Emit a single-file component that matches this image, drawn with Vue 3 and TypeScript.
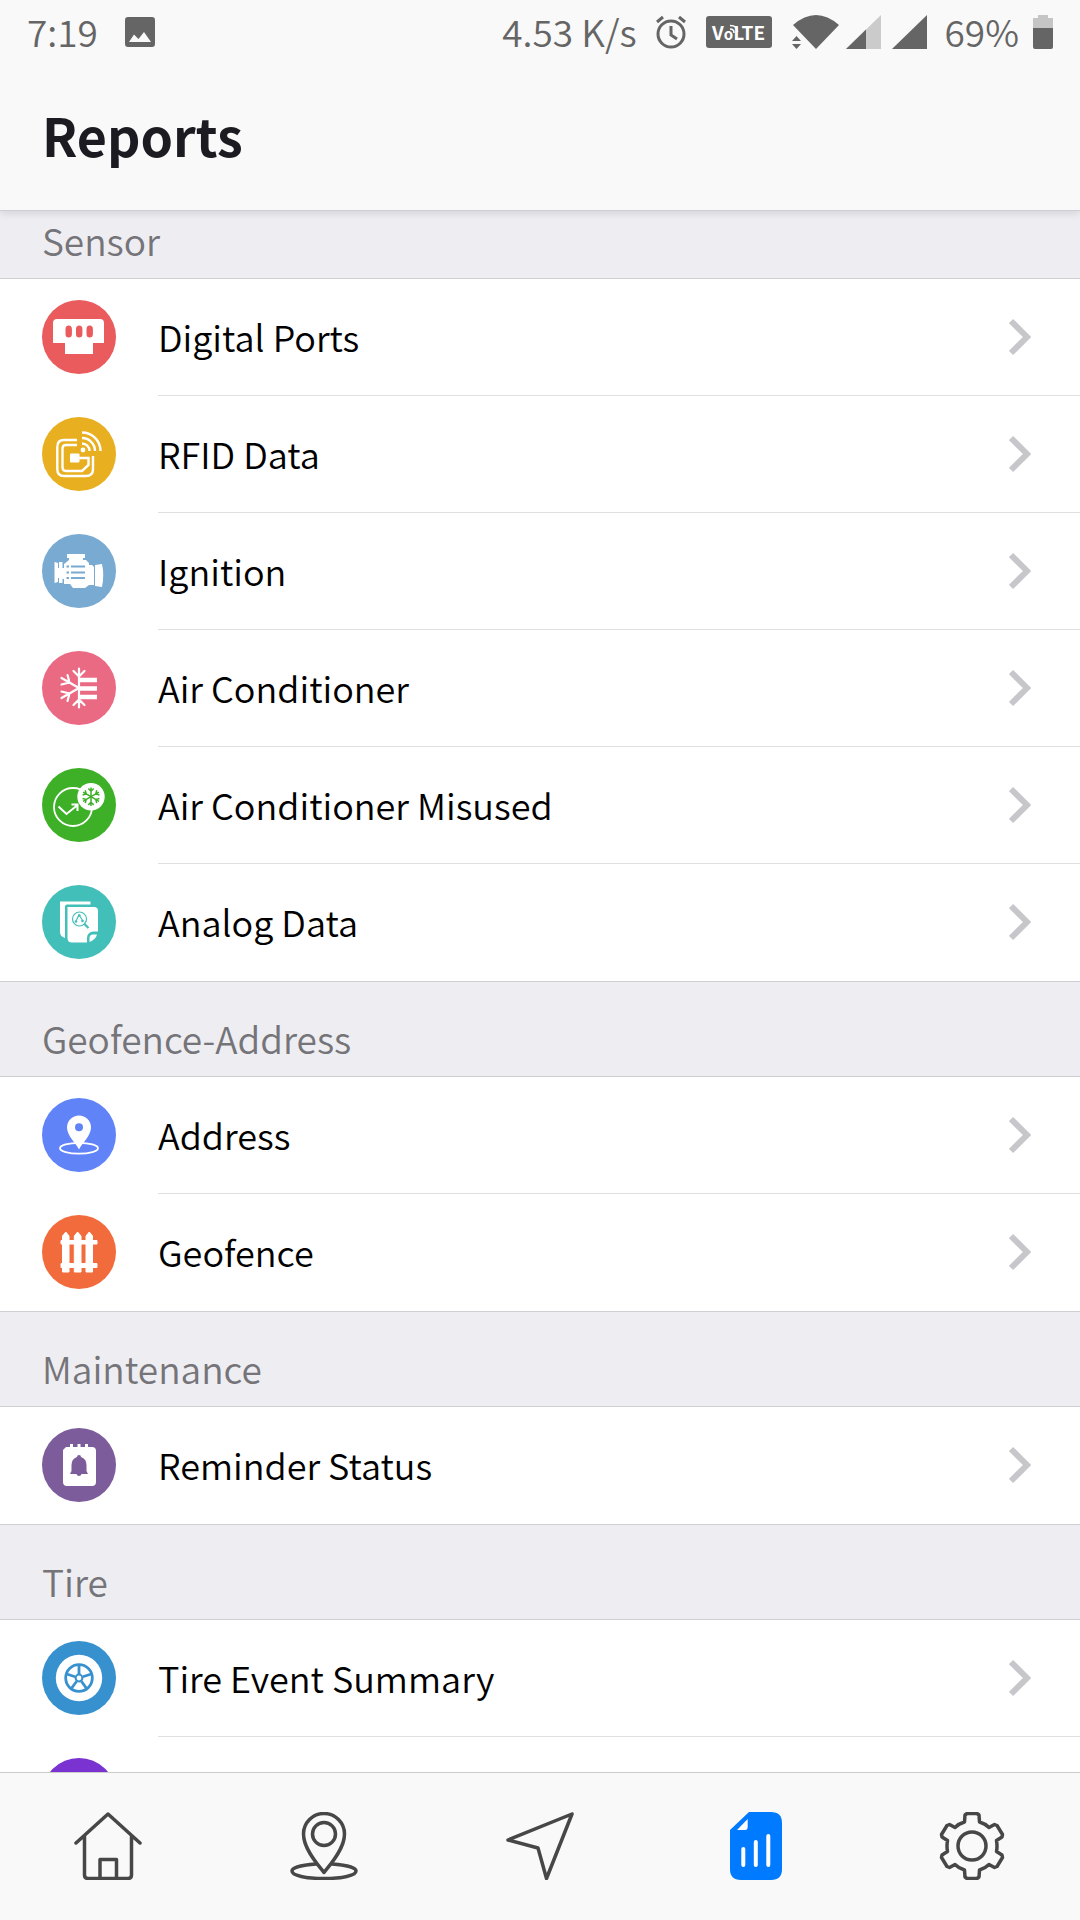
<script setup lang="ts">
interface ReportItem {
  label: string
  icon: string
  color: string
}

interface ReportSection {
  title: string
  items: ReportItem[]
}

interface Tab {
  label: string
  icon: string
  active?: boolean
}

const sections: ReportSection[] = [
  {
    title: 'Sensor',
    items: [
      { label: 'Digital Ports', icon: 'ports', color: '#e95b5c' },
      { label: 'RFID Data', icon: 'rfid', color: '#e8b020' },
      { label: 'Ignition', icon: 'engine', color: '#78aad2' },
      { label: 'Air Conditioner', icon: 'cooling', color: '#ea6a83' },
      { label: 'Air Conditioner Misused', icon: 'misused', color: '#3eb027' },
      { label: 'Analog Data', icon: 'analog', color: '#43bfb9' },
    ],
  },
  {
    title: 'Geofence-Address',
    items: [
      { label: 'Address', icon: 'address', color: '#6183f8' },
      { label: 'Geofence', icon: 'fence', color: '#f26b3c' },
    ],
  },
  {
    title: 'Maintenance',
    items: [{ label: 'Reminder Status', icon: 'reminder', color: '#7d5c9c' }],
  },
  {
    title: 'Tire',
    items: [
      { label: 'Tire Event Summary', icon: 'tire', color: '#3791cf' },
      { label: '', icon: 'blank', color: '#7a33d1' },
    ],
  },
]

const tabs: Tab[] = [
  { label: 'Home', icon: 'home' },
  { label: 'Places', icon: 'pin' },
  { label: 'Navigate', icon: 'arrow' },
  { label: 'Reports', icon: 'report', active: true },
  { label: 'Settings', icon: 'gear' },
]
</script>

<template>
  <div class="app">
    <svg class="sprite" aria-hidden="true">
      <symbol id="i-ports" viewBox="0 0 74 74">
        <path fill="#fff" fill-rule="evenodd" d="M15 19H58Q62 19 62 23V43H51V54H23V43H11V23Q11 19 15 19Z M23.500 29v5q0 3.500 3.200 3.500t3.200-3.500v-5q0-3.500-3.200-3.500t-3.200 3.500Z M34 29v5q0 3.500 3.200 3.500t3.200-3.500v-5q0-3.500-3.200-3.500t-3.200 3.500Z M44.500 29v5q0 3.500 3.200 3.500t3.200-3.500v-5q0-3.500-3.200-3.500t-3.200 3.500Z" />
      </symbol>
      <symbol id="i-rfid" viewBox="0 0 74 74">
        <g fill="none" stroke="#fff" stroke-width="2.400">
          <path d="M35 23H22Q15.300 23 15.300 30V52Q15.300 59 22 59H44Q51 59 51 52V39" />
          <path d="M35 28H24Q20.500 28 20.500 31.500V50Q20.500 54 24 54H40L46.500 48V41H36" />
          <path d="M40 26.500A7.500 7.500 0 0 1 47.500 34M40 21A13 13 0 0 1 53 34M40 15.500A18.500 18.500 0 0 1 58.500 34" />
        </g>
        <rect x="28" y="36.500" width="9.500" height="9" rx="1" fill="#fff" />
        <circle cx="41" cy="33" r="2.400" fill="#fff" />
      </symbol>
      <symbol id="i-engine" viewBox="0 0 74 74">
        <g fill="#fff">
          <path d="M25 20H43V24H41V26H44L47 29V31H50L52 33V51H47L43 54H31L28 50H22V30L27 26V24H25Z" />
          <path d="M12.500 28L16 29V34H17V28H20.500V34H24V45H20.500V49H17V44H16V48L12.500 49Z" />
          <path d="M53 31L60 30Q62.500 41 60 53L53 52Z" />
        </g>
        <path d="M29 32.500H43M29 38.500H43M29 44H43M24.500 32.500H27M24.500 38.500H27M24.500 44H27" fill="none" stroke="currentColor" stroke-width="2" />
      </symbol>
      <symbol id="i-cooling" viewBox="0 0 74 74">
        <path d="M37 17.500V56.500M31.500 20L37 25.500L42.500 20M31.500 54L37 48.500L42.500 54M37 37L19.500 27M37 37L19.500 47M25.500 24L27.500 31.500L19.500 33.500M25.500 50L27.500 42.500L19.500 40.500" fill="none" stroke="#fff" stroke-width="2.200" stroke-linecap="round" />
        <path d="M37 29H55M37 37.500H55M37 46H55" fill="none" stroke="#fff" stroke-width="4.400" />
      </symbol>
      <symbol id="i-misused" viewBox="0 0 74 74">
        <circle cx="31" cy="39" r="19" fill="none" stroke="#fff" stroke-width="1.800" />
        <path d="M16.500 38.500L24.500 46L35 37.500M29.500 36.500H35.500V43" fill="none" stroke="#fff" stroke-width="2" />
        <circle cx="49" cy="28.700" r="13.700" fill="#fff" />
        <g fill="none" stroke="currentColor" stroke-width="1.500">
          <g v-for="angle in [0, 60, 120, 180, 240, 300]" :key="angle" :transform="`rotate(${angle} 49 28.700)`">
            <path d="M49 28.700V19.500M46.300 20.500L49 23.200L51.700 20.500" />
          </g>
        </g>
      </symbol>
      <symbol id="i-analog" viewBox="0 0 74 74">
        <path fill="#fff" d="M18 16.500H48.500V19.500H25Q23 19.500 23 21.500V53Q18 51.500 18 47Z" />
        <path fill="#fff" d="M25.500 22H52Q56 22 56 26V46.500H51Q45 47.500 45 53V57.500H30Q25.500 57.500 25.500 53Z" />
        <path fill="#fff" d="M47.500 57V53Q47.500 49.500 51 49.500H55Q54 54 47.500 57Z" />
        <g fill="none" stroke="currentColor">
          <circle cx="37.500" cy="34" r="7" stroke-width="1.200" />
          <path d="M33.500 37L37 30L41 36" stroke-width="1.200" />
          <path d="M42 38.500L46.500 43" stroke-width="2.200" />
        </g>
        <g fill="currentColor">
          <circle cx="34" cy="36.500" r="1.300" />
          <circle cx="37.300" cy="30.500" r="1.300" />
          <circle cx="40.500" cy="36" r="1.300" />
        </g>
      </symbol>
      <symbol id="i-address" viewBox="0 0 74 74">
        <ellipse cx="37" cy="50.200" rx="19" ry="5.400" fill="none" stroke="#fff" stroke-width="1.800" />
        <path fill="#fff" d="M37 51.500C34 45 25 38 25 29.500A12 12 0 0 1 49 29.500C49 38 40 45 37 51.500Z" />
        <circle cx="37" cy="29.300" r="4" fill="currentColor" />
      </symbol>
      <symbol id="i-fence" viewBox="0 0 74 74">
        <path fill="#fff" d="M19 25.500H55V29H19ZM19 48.500H55V52.500H19ZM20.500 57V21L23.800 17L27 21V57ZM32.300 57V21L35.600 17L39 21V57ZM44 57V21L47.300 17L50.500 21V57Z" stroke="#fff" stroke-linejoin="round" />
      </symbol>
      <symbol id="i-reminder" viewBox="0 0 74 74">
        <path fill="#fff" d="M24 19H28V16H31V19H35.500V16H38.500V19H43V16H46V19H50Q54 19 54 23V54Q54 58 50 58H25Q21 58 21 54V22Z" />
        <path fill="currentColor" d="M37 27Q39 27 39 29Q44.500 31 44.500 37V43L46 46H39.500Q39 48 37 48T34.500 46H28L29.500 43V37Q29.500 31 35 29Q35 27 37 27Z" />
      </symbol>
      <symbol id="i-tire" viewBox="0 0 74 74">
        <circle cx="37" cy="37" r="23.200" fill="#fff" />
        <g fill="none" stroke="currentColor" stroke-width="2.800">
          <circle cx="37" cy="37" r="13.300" />
          <circle cx="37" cy="37" r="3.400" stroke-width="2" />
          <path v-for="angle in [0, 72, 144, 216, 288]" :key="angle" :transform="`rotate(${angle} 37 37)`" d="M37 33V24" />
        </g>
      </symbol>
      <symbol id="i-blank" viewBox="0 0 74 74" />

      <symbol id="i-home" viewBox="0 0 68 68">
        <path d="M2 31L34 2L66 31M10.500 24V63Q10.500 66.500 14 66.500H54Q57.500 66.500 57.500 63V24M26 66V47.500H42.500V66" />
      </symbol>
      <symbol id="i-pin" viewBox="0 0 68 68">
        <path d="M26 52C12 53 2 55.500 2 59C2 63.500 16 66.500 34 66.500S66 63.500 66 59C66 55.500 56 53 42 52" />
        <path d="M34 60.500C30 55 13.500 38 13.500 22A20.500 20.500 0 0 1 54.500 22C54.500 38 38 55 34 60.500Z" />
        <circle cx="34" cy="22" r="11.500" />
      </symbol>
      <symbol id="i-arrow" viewBox="0 0 68 68">
        <path d="M66 2L2 28L32 36L40.500 66.500Z" />
      </symbol>
      <symbol id="i-report" viewBox="0 0 68 68">
        <path fill="#007aff" stroke="none" d="M27 0H49Q60 0 60 11V57Q60 68 49 68H19Q8 68 8 57V18Z" />
        <path fill="#fff" stroke="none" d="M15 18L25.700 7V15Q25.700 18 23 18Z" />
        <path stroke="#fff" stroke-width="4" d="M21.300 37V53M33.800 30V53M46.300 24V53" />
      </symbol>
      <symbol id="i-gear" viewBox="-34 -34 68 68">
        <path d="M-5 -32.500H5L7 -31L7.500 -24Q13 -22.500 17 -18.500L22.500 -21.500L25 -20.500L30.500 -11.500L30 -9L24.500 -5.500Q25.500 0 24.500 5.500L30 9L30.500 11.500L25 20.500L22.500 21.500L17 18.500Q13 22.500 7.500 24L7 31L5 32.500H-5L-7 31L-7.500 24Q-13 22.500 -17 18.500L-22.500 21.500L-25 20.500L-30.500 11.500L-30 9L-24.500 5.500Q-25.500 0 -24.500 -5.500L-30 -9L-30.500 -11.500L-25 -20.500L-22.500 -21.500L-17 -18.500Q-13 -22.500 -7.500 -24L-7 -31Z" />
        <circle r="14" />
      </symbol>
    </svg>

    <header class="top">
      <div class="status">
        <time>7:19</time>
        <svg class="picture" width="30" height="30" viewBox="0 0 30 30">
          <path fill="#656565" fill-rule="evenodd" d="M3 0H27Q30 0 30 3V27Q30 30 27 30H3Q0 30 0 27V3Q0 0 3 0ZM4 25H26L19 15L13.500 22L9 17.500Z" />
        </svg>
        <span class="speed">4.53 K/s</span>
        <svg class="alarm" width="32" height="34" viewBox="0 0 32 34" fill="none" stroke="#656565" stroke-width="3">
          <circle cx="16" cy="19" r="13" />
          <path d="M16 11V20L22 24M2 7L8 2M30 7L24 2" />
        </svg>
        <span class="volte">
          V<span class="volte-o">o</span>LTE
          <svg class="waves" width="10" height="10" viewBox="0 0 10 10" fill="none" stroke="#fff" stroke-width="1.500">
            <path d="M1 5Q5 5 5 9M1 1.500Q8.500 1.500 8.500 8" />
          </svg>
        </span>
        <svg class="wifi" width="48" height="34" viewBox="0 0 48 34" fill="#656565">
          <path d="M1 10Q24 -10 47 10L24 34ZM0 26H9L4.500 21ZM0 29H9L4.500 34Z" />
        </svg>
        <svg class="signal" width="35" height="34" viewBox="0 0 35 34">
          <path fill="#cbcbcb" d="M35 0V34H0Z" />
          <path fill="#656565" d="M20 14.500V34H0Z" />
        </svg>
        <svg class="signal" width="35" height="34" viewBox="0 0 35 34">
          <path fill="#656565" d="M35 0V34H0Z" />
        </svg>
        <span class="percent">69%</span>
        <svg width="20" height="34" viewBox="0 0 20 34">
          <path fill="#c5c5c5" d="M5 0H15V3H20V13H0V3H5Z" />
          <path fill="#656565" d="M0 13H20V32Q20 34 18 34H2Q0 34 0 32Z" />
        </svg>
      </div>
      <h1>Reports</h1>
    </header>

    <main>
      <section v-for="section in sections" :key="section.title">
        <h2>{{ section.title }}</h2>
        <ul>
          <li v-for="item in section.items" :key="item.icon">
            <a href="#">
              <svg class="badge" :style="{ color: item.color }" aria-hidden="true">
                <circle cx="37" cy="37" r="37" fill="currentColor" />
                <use :href="`#i-${item.icon}`" width="74" height="74" />
              </svg>
              <span class="line">
                <span class="label">{{ item.label }}</span>
                <svg class="chevron" width="22" height="38" viewBox="0 0 22 38" aria-hidden="true">
                  <path d="M2 3L18 19L2 35" fill="none" stroke="#c7c7cb" stroke-width="6" />
                </svg>
              </span>
            </a>
          </li>
        </ul>
      </section>
    </main>

    <nav>
      <a v-for="tab in tabs" :key="tab.icon" href="#" :aria-label="tab.label" :aria-current="tab.active ? 'page' : undefined">
        <svg class="tab-icon" aria-hidden="true"><use :href="`#i-${tab.icon}`" /></svg>
      </a>
    </nav>
  </div>
</template>

<style>
body {
  margin: 0;
}
</style>

<style scoped>
.app {
  display: flex;
  flex-direction: column;
  height: 100vh;
  overflow: hidden;
  background: #fff;
  color: #000;
  font-family: 'Noto Sans CJK SC', 'Noto Sans', sans-serif;
  font-size: 36px;
  font-weight: 350;
  line-height: 48px;
}

.sprite {
  position: absolute;
  width: 0;
  height: 0;
}

.top {
  position: relative;
  z-index: 1;
  flex: none;
  border-bottom: 1px solid #cfced4;
  background: #f9f9f9;
  box-shadow: 0 2px 8px rgba(0, 0, 0, 0.12);
}

.status {
  display: flex;
  align-items: center;
  height: 64px;
  padding: 0 27px;
  color: #656565;
  font-size: 37px;
  white-space: nowrap;
}

.status svg {
  flex: none;
}

time,
.speed,
.percent,
.label {
  padding-bottom: 2px;
}

.picture {
  margin-left: 27px;
}

.speed {
  margin-left: auto;
}

.alarm {
  margin-left: 18px;
}

.volte {
  position: relative;
  box-sizing: border-box;
  width: 66px;
  height: 32px;
  margin-left: 19px;
  border-radius: 3px;
  background: #656565;
  color: #fff;
  font-size: 19px;
  font-weight: 700;
  line-height: 32px;
  text-align: center;
}

.volte-o {
  font-size: 15px;
}

.waves {
  position: absolute;
  top: 8px;
  left: 23px;
}

.wifi {
  margin-left: 20px;
}

.signal {
  margin-left: 6px;
}

.signal + .signal {
  margin-left: 11px;
}

.percent {
  margin: 0 14px 0 18px;
}

h1 {
  margin: 0;
  padding: 35px 42px 39px;
  color: #1c1b22;
  font-size: 52px;
  font-weight: 700;
  line-height: 72px;
}

main {
  flex: 1;
  min-height: 0;
  overflow: hidden;
}

h2 {
  margin: 0;
  padding: 32px 42px 14px;
  border: solid #cfced3;
  border-width: 1px 0;
  background: #eeedf2;
  color: #757479;
  font-size: 37px;
  font-weight: 350;
  line-height: 48px;
}

section:first-child h2 {
  padding-top: 5px;
  border-top: 0;
}

ul {
  margin: 0;
  padding: 0;
  list-style: none;
}

li a {
  display: flex;
  align-items: flex-start;
  height: 117px;
  padding-left: 42px;
  color: inherit;
  text-decoration: none;
}

.badge {
  flex: none;
  width: 74px;
  height: 74px;
  margin-top: 21px;
}

.line {
  display: flex;
  flex: 1;
  align-items: center;
  justify-content: space-between;
  box-sizing: border-box;
  height: 117px;
  margin-left: 42px;
  padding-right: 49px;
  border-bottom: 1px solid #dfdfe2;
}

li:last-child .line {
  border-bottom-color: transparent;
}

nav {
  display: flex;
  flex: none;
  border-top: 1px solid #cbcbcb;
  background: #f9f9f9;
}

nav a {
  display: flex;
  flex: 1;
  justify-content: center;
  padding: 39px 0 40px;
}

.tab-icon {
  width: 68px;
  height: 68px;
  fill: none;
  stroke: #474747;
  stroke-width: 3.5;
  stroke-linecap: round;
  stroke-linejoin: round;
}
</style>
